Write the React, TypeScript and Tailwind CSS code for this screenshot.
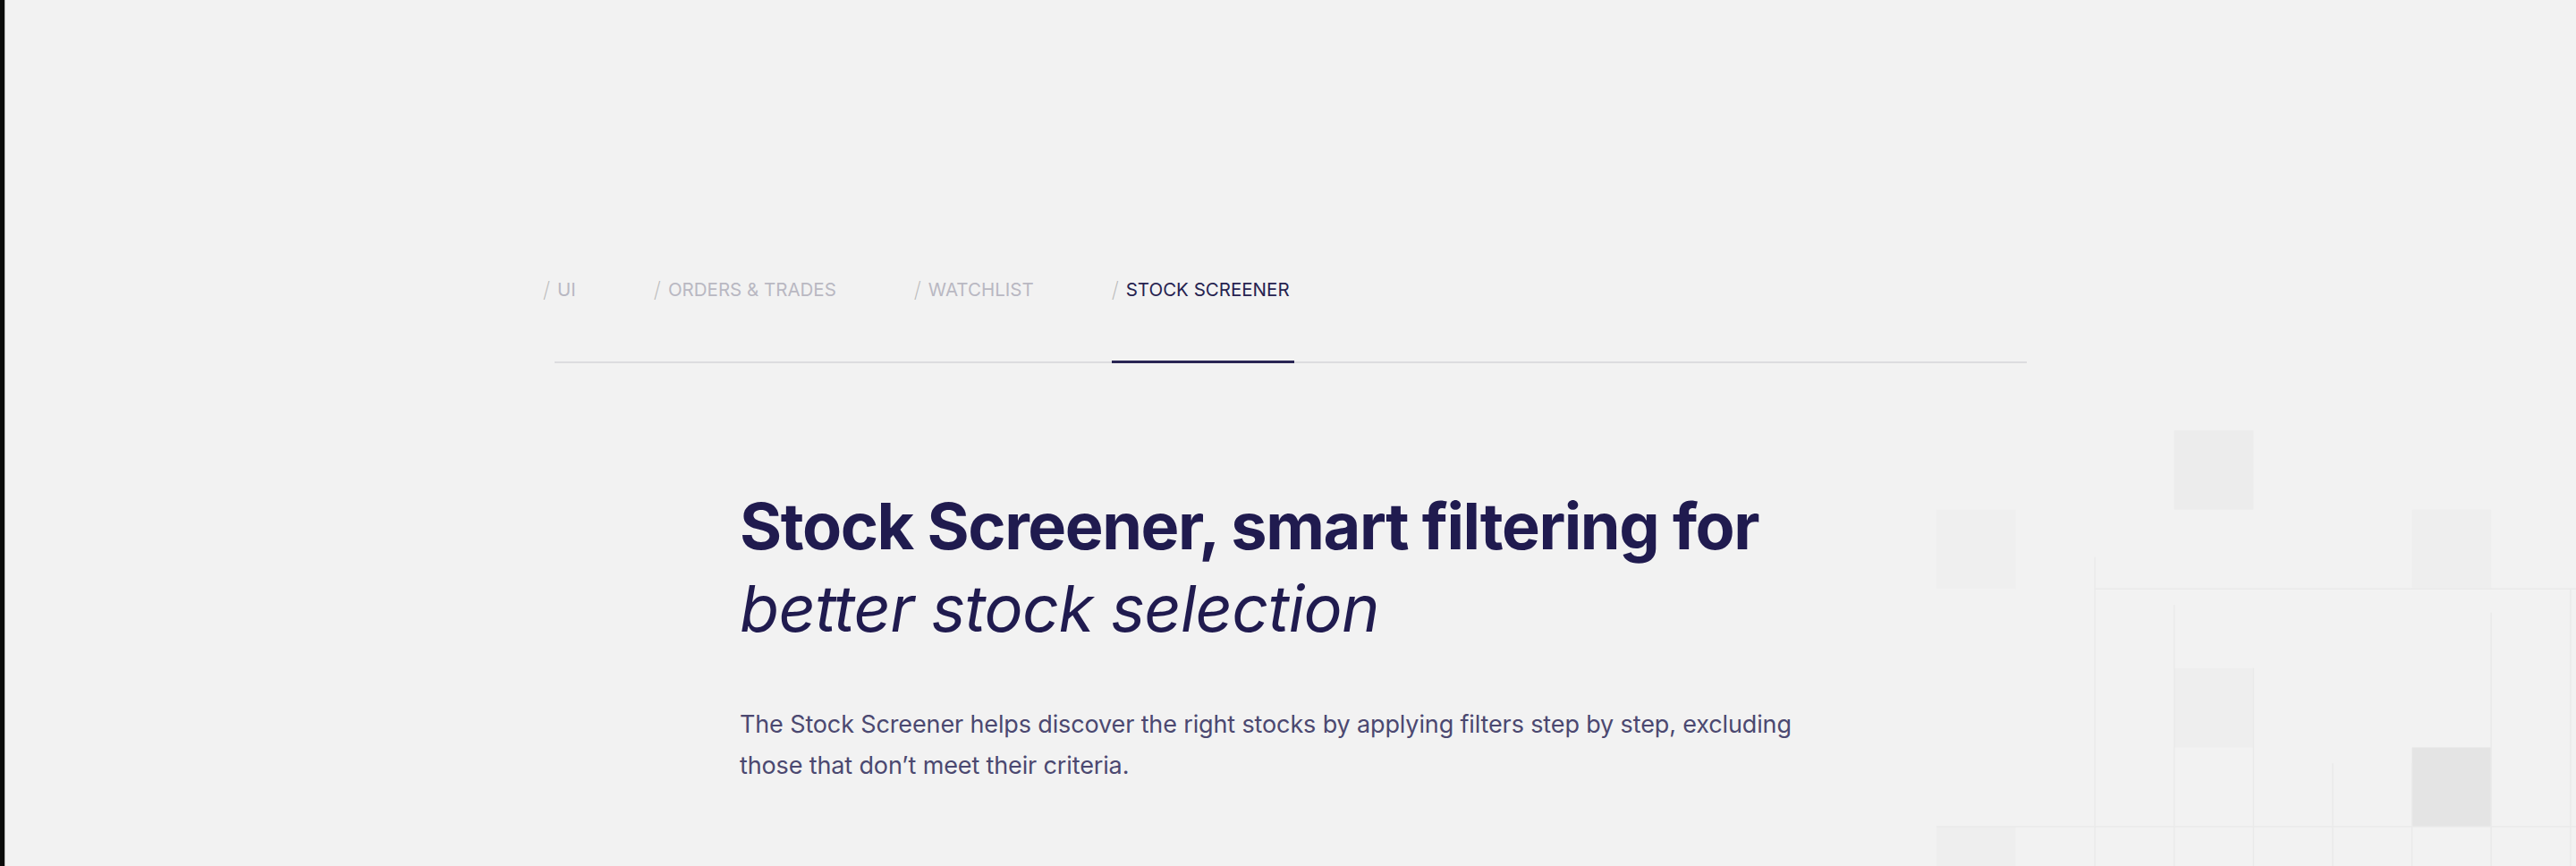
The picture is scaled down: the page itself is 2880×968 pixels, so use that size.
const tabs = [
  { label: 'UI', active: false },
  { label: 'ORDERS & TRADES', active: false },
  { label: 'WATCHLIST', active: false },
  { label: 'STOCK SCREENER', active: true },
];

// decorative grid in the lower right corner
function GridDecor() {
  const cell = 88.6;
  const ox = 2165 - 2100;
  const oy = 481 - 392;
  const x = (c: number) => ox + c * cell;
  const y = (r: number) => oy + r * cell;
  const filled: [number, number, string][] = [
    [3, 0, '#ececec'],
    [0, 1, '#efefef'],
    [6, 1, '#eeeeee'],
    [3, 3, '#eeeeee'],
    [6, 4, '#e4e4e4'],
    [0, 5, '#eeeeee'],
  ];
  const vlines: [number, number][] = [
    [2, 1.6],
    [3, 2.2],
    [4, 3],
    [5, 4.2],
    [6, 4.2],
    [7, 2.3],
    [8, 2],
  ];
  const hlines: [number, number, number][] = [
    [2, 2, 8.2],
    [5, 0, 8.2],
  ];
  return (
    <svg
      className="absolute left-[2100px] top-[392px] pointer-events-none"
      width="780"
      height="576"
      viewBox="0 0 780 576"
    >
      {filled.map(([c, r, f], i) => (
        <rect key={i} x={x(c)} y={y(r)} width={cell} height={cell} fill={f} />
      ))}
      {vlines.map(([c, from], i) => (
        <line key={'v' + i} x1={x(c)} x2={x(c)} y1={y(from)} y2={576} stroke="#eaeaea" strokeWidth="1.5" />
      ))}
      {hlines.map(([r, a, b], i) => (
        <line key={'h' + i} y1={y(r)} y2={y(r)} x1={x(a)} x2={x(b)} stroke="#eaeaea" strokeWidth="1.5" />
      ))}
    </svg>
  );
}

export default function App() {
  return (
    <div className="relative flex h-[968px] w-full overflow-hidden bg-[#f2f2f2] font-['Inter',sans-serif]">
      <div className="w-[5px] shrink-0 bg-[#0b0c0b]" />
      <div className="w-px shrink-0 bg-[#bdbdbd]" />

      <GridDecor />

      <main className="relative flex-1">
        {/* tabs */}
        <div className="mx-auto mt-[310px] w-[1646px] border-b-2 border-[#dcdcdf]">
          <div className="-ml-[13px] flex gap-[82px]">
            {tabs.map((t) => (
              <div
                key={t.label}
                className={`-mb-[2px] flex items-center pb-[65px] pr-[5px] text-[20.5px] leading-[28px] border-b-[3px] ${
                  t.active ? 'border-[#2a2654] text-[#262250]' : 'border-transparent text-[#b9b8c2]'
                }`}
              >
                <span className="mr-[8px] text-[24px] font-extralight text-[#b7b7b7]">/</span>
                {t.label}
              </div>
            ))}
          </div>
        </div>

        {/* intro */}
        <div className="mx-auto mt-[136px] w-[1232px]">
          <h1 className="whitespace-nowrap text-[72px] leading-[92px] font-bold tracking-[-0.02em] text-[#201b4f]">
            Stock Screener, smart filtering for
            <br />
            <span className="font-normal italic tracking-[-0.01em]">better stock selection</span>
          </h1>
          <p className="mt-[61px] whitespace-nowrap text-[27px] leading-[46px] tracking-[-0.005em] text-[#4b4870]">
            The Stock Screener helps discover the right stocks by applying filters step by step, excluding
            <br />
            those that don’t meet their criteria.
          </p>
        </div>
      </main>
    </div>
  );
}
